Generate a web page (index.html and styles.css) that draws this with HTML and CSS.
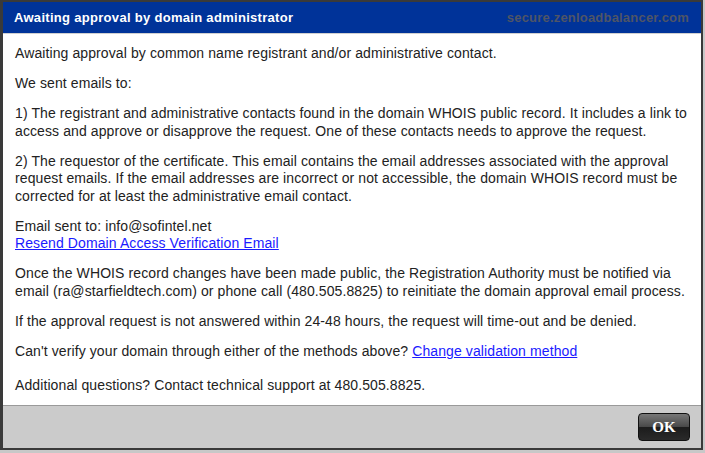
FILE: index.html
```html
<!DOCTYPE html>
<html lang="en">
<head>
  <meta charset="UTF-8">
  <title>Awaiting approval</title>
  <link rel="stylesheet" href="styles.css">
</head>
<body>
  <div class="dialog">
    <div class="titlebar">
      <span class="title">Awaiting approval by domain administrator</span>
      <span class="site">secure.zenloadbalancer.com</span>
    </div>
    <div class="content">
      <p>Awaiting approval by common name registrant and/or administrative contact.</p>
      <p>We sent emails to:</p>
      <p>1) The registrant and administrative contacts found in the domain WHOIS public record. It includes a link to access and approve or disapprove the request. One of these contacts needs to approve the request.</p>
      <p>2) The requestor of the certificate. This email contains the email addresses associated with the approval request emails. If the email addresses are incorrect or not accessible, the domain WHOIS record must be corrected for at least the administrative email contact.</p>
      <p>Email sent to: info@sofintel.net<br><a href="#">Resend Domain Access Verification Email</a></p>
      <p>Once the WHOIS record changes have been made public, the Registration Authority must be notified via email (ra@starfieldtech.com) or phone call (480.505.8825) to reinitiate the domain approval email process.</p>
      <p>If the approval request is not answered within 24-48 hours, the request will time-out and be denied.</p>
      <p>Can't verify your domain through either of the methods above? <a href="#">Change validation method</a></p>
      <p class="last">Additional questions? Contact technical support at 480.505.8825.</p>
    </div>
    <div class="footer">
      <button class="ok">OK</button>
    </div>
  </div>
</body>
</html>
```

FILE: styles.css
```css
html, body {margin: 0; height: 100%; overflow: hidden}
body {
  background: #c8c8c8;
  font-family: "Liberation Sans", Arial, sans-serif;
}

.dialog {
  width: 698px;
  height: 446px;
  border: 2px solid #3a3a3a;
  border-left-width: 3px;
  display: flex;
  flex-direction: column;
  background: #fff;
}

.titlebar {
  flex-shrink: 0;
  height: 31px;
  background: #003399;
  display: flex;
  align-items: center;
  justify-content: space-between;
  padding: 0 12px 0 11px;
  border-bottom: 1px solid #d0d0d0;
  font-size: 13px;
  font-weight: bold;
  letter-spacing: 0.3px;
}
.title {
  color: #fff;
}
.site {
  color: #4f5566;
  letter-spacing: 0.2px;
}

.content {
  flex: 1;
  min-height: 0;
  overflow: hidden;
  padding: 11px 8px 0 12px;
  font-size: 14px;
  letter-spacing: 0.1px;
  line-height: 17.5px;
  color: #222;
}
.content p {
  margin: 0 0 12.5px 0;
}
.content p.last {
  margin-top: 16.5px;
}
.content a {
  color: #1a1aff;
}

.footer {
  flex-shrink: 0;
  height: 42px;
  background: #cbcbcb;
  border-top: 1px solid #9a9a9a;
  display: flex;
  align-items: center;
  justify-content: flex-end;
  padding-right: 11px;
}
.ok {
  width: 52px;
  height: 28px;
  border: 1px solid #111;
  border-radius: 4px;
  background: linear-gradient(#777 0%, #4a4a4a 48%, #1c1c1c 52%, #2a2a2a 100%);
  color: #fff;
  font-family: "Liberation Serif", "Times New Roman", serif;
  font-weight: bold;
  font-size: 15px;
  padding: 0;
}
```
